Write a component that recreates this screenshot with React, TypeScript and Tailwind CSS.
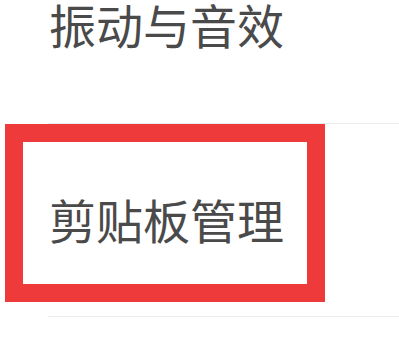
export default function App() {
  return (
    <div className="w-[399px] h-[348px] overflow-hidden bg-white" style={{ fontFamily: '"Noto Sans CJK SC", "Noto Sans", sans-serif' }}>
      <div className="flex flex-col">
        {/* first row, its top is off screen */}
        <div className="h-[123px] flex items-start pl-[49px] pt-[0px]">
          <span className="text-[47px] leading-none text-[#4a4a4a]">振动与音效</span>
        </div>
        <div className="ml-[48px] h-px bg-[#ebebeb]" />

        <div className="relative h-[192px] flex items-center pl-[49px]">
          <span className="text-[47px] leading-none text-[#4a4a4a] mt-[-4px]">剪贴板管理</span>
          {/* highlight box */}
          <div className="absolute left-[5px] top-[0px] w-[320px] h-[178px] border-[18px] border-[#ee3a3a]" />
        </div>
        <div className="ml-[48px] h-px bg-[#ebebeb]" />
      </div>
    </div>
  )
}
